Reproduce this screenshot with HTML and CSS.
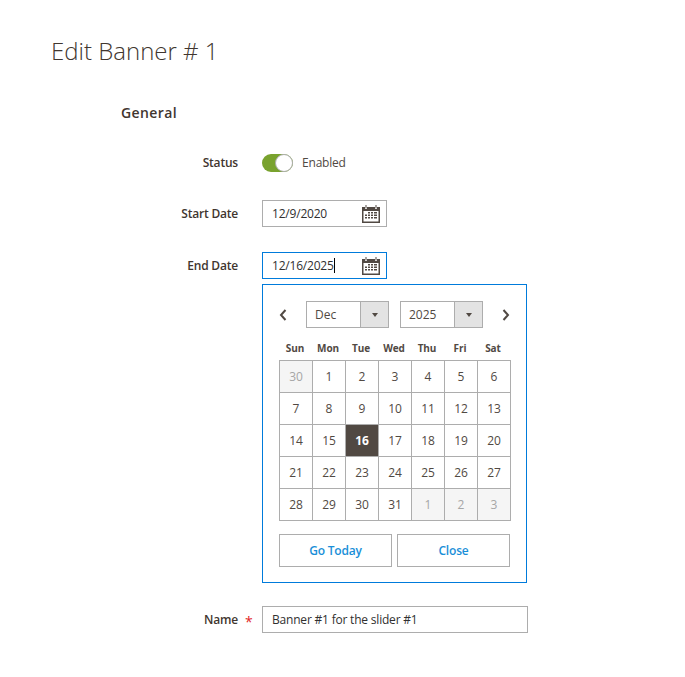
FILE: index.html
```html
<!DOCTYPE html>
<html lang="en">
<head>
  <meta charset="UTF-8">
  <title>Edit Banner # 1</title>
  <link rel="stylesheet" href="styles.css">
</head>
<body>
  <h1 class="page-title">Edit Banner # 1</h1>

  <div class="form">
    <h2 class="section-title">General</h2>

    <div class="row row-status">
      <label class="row-label">Status</label>
      <div class="row-control toggle-wrap">
        <span class="toggle"><span class="toggle-knob"></span></span>
        <span class="toggle-text">Enabled</span>
      </div>
    </div>

    <div class="row row-start">
      <label class="row-label">Start Date</label>
      <div class="row-control">
        <div class="date-input">
          <span class="input-text">12/9/2020</span>
          <svg class="cal-icon" width="18" height="18" viewBox="0 0 18 18">
            <path fill="#514943" d="M0 2h3v2h2V2h8v2h2V2h3v16H0z"/>
            <path fill="#514943" d="M3.5 0h1v3.5h-1zM13.5 0h1v3.5h-1z"/>
            <rect fill="#fff" x="1.5" y="6" width="15" height="10.5"/>
            <path fill="#514943" d="M6 7h2v1.500H6zM9 7h2v1.500H9zM12 7h3v1.500h-3zM3 9.500h2V11H3zM6 9.500h2V11H6zM9 9.500h2V11H9zM12 9.500h3V11h-3zM3 12h2v1.500H3zM6 12h2v1.500H6zM9 12h2v1.500H9zM12 12h3v1.500h-3z"/>
          </svg>
        </div>
      </div>
    </div>

    <div class="row row-end">
      <label class="row-label">End Date</label>
      <div class="row-control">
        <div class="date-input date-input-focus">
          <span class="input-text">12/16/2025<span class="caret"></span></span>
          <svg class="cal-icon" width="18" height="18" viewBox="0 0 18 18">
            <path fill="#514943" d="M0 2h3v2h2V2h8v2h2V2h3v16H0z"/>
            <path fill="#514943" d="M3.5 0h1v3.5h-1zM13.5 0h1v3.5h-1z"/>
            <rect fill="#fff" x="1.5" y="6" width="15" height="10.5"/>
            <path fill="#514943" d="M6 7h2v1.500H6zM9 7h2v1.500H9zM12 7h3v1.500h-3zM3 9.500h2V11H3zM6 9.500h2V11H6zM9 9.500h2V11H9zM12 9.500h3V11h-3zM3 12h2v1.500H3zM6 12h2v1.500H6zM9 12h2v1.500H9zM12 12h3v1.500h-3z"/>
          </svg>
        </div>

        <div class="calendar">
          <div class="cal-head">
            <svg class="cal-arrow" width="8" height="12" viewBox="0 0 8 12"><path d="M6.500 1L2 6l4.500 5" fill="none" stroke="#514943" stroke-width="2"/></svg>
            <div class="cal-select cal-select-month">
              <span class="cal-select-text">Dec</span>
              <span class="cal-select-btn"><span class="cal-select-tri"></span></span>
            </div>
            <div class="cal-select cal-select-year">
              <span class="cal-select-text">2025</span>
              <span class="cal-select-btn"><span class="cal-select-tri"></span></span>
            </div>
            <svg class="cal-arrow cal-arrow-next" width="8" height="12" viewBox="0 0 8 12"><path d="M1.500 1L6 6l-4.500 5" fill="none" stroke="#514943" stroke-width="2"/></svg>
          </div>

          <table class="cal-table">
            <thead>
              <tr><th>Sun</th><th>Mon</th><th>Tue</th><th>Wed</th><th>Thu</th><th>Fri</th><th>Sat</th></tr>
            </thead>
            <tbody>
              <tr><td class="other">30</td><td>1</td><td>2</td><td>3</td><td>4</td><td>5</td><td>6</td></tr>
              <tr><td>7</td><td>8</td><td>9</td><td>10</td><td>11</td><td>12</td><td>13</td></tr>
              <tr><td>14</td><td>15</td><td class="selected">16</td><td>17</td><td>18</td><td>19</td><td>20</td></tr>
              <tr><td>21</td><td>22</td><td>23</td><td>24</td><td>25</td><td>26</td><td>27</td></tr>
              <tr><td>28</td><td>29</td><td>30</td><td>31</td><td class="other">1</td><td class="other">2</td><td class="other">3</td></tr>
            </tbody>
          </table>

          <div class="cal-buttons">
            <button class="cal-btn">Go Today</button>
            <button class="cal-btn">Close</button>
          </div>
        </div>
      </div>
    </div>

    <div class="row row-name">
      <label class="row-label">Name<span class="required">*</span></label>
      <div class="row-control">
        <div class="text-input"><span class="input-text">Banner #1 for the slider #1</span></div>
      </div>
    </div>
  </div>
</body>
</html>
```

FILE: styles.css
```css
body {
  font-family: "Open Sans", "Noto Sans", sans-serif;
  margin: 0;
  background-color: #fff;
  color: #41362f;
  font-size: 12px;
}

.page-title {
  margin: 0;
  padding: 34px 0 0 51px;
  font-size: 24px;
  line-height: 33px;
  font-weight: 300;
}

.form {
  padding-top: 36px;
}

.section-title {
  margin: 0 0 0 121px;
  font-size: 14px;
  line-height: 19px;
  font-weight: 600;
  letter-spacing: 0.4px;
}

.row {
  display: flex;
  align-items: flex-start;
}

.row-status {
  margin-top: 27px;
}

.row-start {
  margin-top: 24px;
}

.row-end {
  margin-top: 25px;
}

.row-name {
  margin-top: 23px;
}

.row-label {
  width: 238px;
  flex: none;
  text-align: right;
  font-weight: 600;
  letter-spacing: -0.2px;
  line-height: 27px;
  position: relative;
}

.row-control {
  margin-left: 24px;
}

.required {
  position: absolute;
  left: 245px;
  top: 2px;
  color: #e22626;
  font-weight: 400;
  font-size: 14px;
}

.toggle-wrap {
  display: flex;
  align-items: center;
  height: 27px;
}

.toggle {
  display: block;
  width: 31px;
  height: 18px;
  background-color: #79a22e;
  border-radius: 9px;
  position: relative;
}

.toggle-knob {
  position: absolute;
  right: 0;
  top: 0;
  width: 16px;
  height: 16px;
  border: 1px solid #adadad;
  border-radius: 50%;
  background-color: #fff;
}

.toggle-text {
  margin-left: 9px;
  color: #514943;
  letter-spacing: -0.2px;
}

.date-input, .text-input {
  display: flex;
  align-items: center;
  justify-content: space-between;
  box-sizing: border-box;
  height: 27px;
  border: 1px solid #adadad;
  padding: 0 6px 0 9px;
}

.date-input {
  width: 125px;
}

.text-input {
  width: 266px;
}

.date-input-focus {
  border-color: #007bdb;
}

.input-text {
  color: #303030;
  line-height: 25px;
  letter-spacing: -0.2px;
}

.caret {
  display: inline-block;
  width: 1px;
  height: 15px;
  background-color: #000;
  vertical-align: -3px;
}

.cal-icon {
  display: block;
  flex: none;
}

.calendar {
  box-sizing: border-box;
  width: 265px;
  height: 299px;
  margin-top: 5px;
  border: 1px solid #007bdb;
  padding: 16px 16px 0;
}

.cal-head {
  display: flex;
  align-items: center;
  height: 27px;
}

.cal-arrow {
  flex: none;
}

.cal-arrow-next {
  margin-left: 19px;
}

.cal-select {
  display: flex;
  box-sizing: border-box;
  width: 83px;
  height: 27px;
  border: 1px solid #adadad;
  color: #514943;
}

.cal-select-month {
  margin-left: 19px;
}

.cal-select-year {
  margin-left: 11px;
}

.cal-select-text {
  flex: 1;
  padding-left: 8px;
  line-height: 25px;
}

.cal-select-btn {
  display: flex;
  align-items: center;
  justify-content: center;
  width: 27px;
  border-left: 1px solid #adadad;
  background-color: #e3e3e3;
}

.cal-select-tri {
  width: 0;
  height: 0;
  border-left: 3.500px solid transparent;
  border-right: 3.500px solid transparent;
  border-top: 4px solid #514943;
}

.cal-table {
  border-collapse: collapse;
  table-layout: fixed;
  width: 232px;
  margin-top: 12px;
}

.cal-table th {
  height: 16px;
  padding: 0 2px 4px 0;
  font-size: 10px;
  font-weight: 700;
  letter-spacing: -0.1px;
  color: #514943;
  vertical-align: middle;
}

.cal-table td {
  height: 31px;
  padding: 0;
  border: 1px solid #adadad;
  text-align: center;
  color: #514943;
}

.cal-table td.other {
  background-color: #f5f5f5;
  color: #a6a6a6;
}

.cal-table td.selected {
  background-color: #514943;
  color: #fff;
  font-weight: 700;
}

.cal-buttons {
  display: flex;
  justify-content: space-between;
  margin-top: 13px;
  width: 231px;
}

.cal-btn {
  width: 113px;
  height: 33px;
  padding: 0;
  font-family: inherit;
  font-size: 12px;
  font-weight: 600;
  letter-spacing: -0.2px;
  color: #1a8fd8;
  background-color: #fff;
  border: 1px solid #adadad;
}
```
